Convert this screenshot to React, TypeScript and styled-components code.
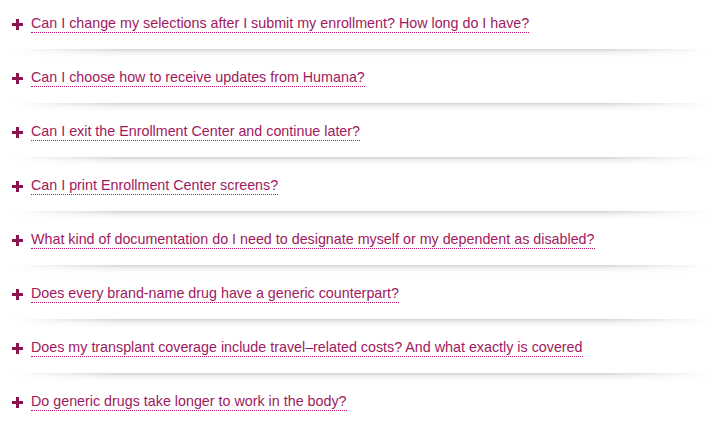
import React from "react";
import styled, { createGlobalStyle } from "styled-components";

const Global = createGlobalStyle`
  html, body { margin: 0; padding: 0; background: #ffffff; }
  body { font-family: "Liberation Sans", Arial, sans-serif; }
`;

const List = styled.ul`
  list-style: none;
  margin: 0;
  padding: 0;
  width: 721px;
`;

const Row = styled.li`
  position: relative;
  height: 54px;
  box-sizing: border-box;
  padding: 15px 0 0 12px;
  &::after {
    content: "";
    position: absolute;
    left: 14px;
    right: 10px;
    top: 49px;
    height: 8px;
    background: linear-gradient(to bottom, rgba(0, 0, 0, 0.17), rgba(0, 0, 0, 0.06) 40%, rgba(0, 0, 0, 0));
    -webkit-mask-image: linear-gradient(to right, transparent, #000 15%, #000 85%, transparent);
    mask-image: linear-gradient(to right, transparent, #000 15%, #000 85%, transparent);
  }
  &:last-child::after { display: none; }
`;

const Toggle = styled.button`
  display: flex;
  align-items: center;
  gap: 8px;
  border: 0;
  background: none;
  padding: 0;
  cursor: pointer;
  font: inherit;
  text-align: left;
`;

const Plus = styled.svg`
  width: 11px;
  height: 11px;
  flex: none;
  margin-top: 1px;
`;

const Question = styled.span`
  font-size: 14.3px;
  line-height: 17px;
  color: #a0195e;
  border-bottom: 1px dotted #b80f70;
`;

const questions = [
  "Can I change my selections after I submit my enrollment? How long do I have?",
  "Can I choose how to receive updates from Humana?",
  "Can I exit the Enrollment Center and continue later?",
  "Can I print Enrollment Center screens?",
  "What kind of documentation do I need to designate myself or my dependent as disabled?",
  "Does every brand-name drug have a generic counterpart?",
  "Does my transplant coverage include travel\u2013related costs? And what exactly is covered",
  "Do generic drugs take longer to work in the body?",
];

export default function App() {
  return (
    <>
      <Global />
      <List>
        {questions.map((q) => (
          <Row key={q}>
            <Toggle>
              <Plus viewBox="0 0 11 11">
                <path d="M4 0h3v4h4v3H7v4H4V7H0V4h4z" fill="#8a1450" />
              </Plus>
              <Question>{q}</Question>
            </Toggle>
          </Row>
        ))}
      </List>
    </>
  );
}
